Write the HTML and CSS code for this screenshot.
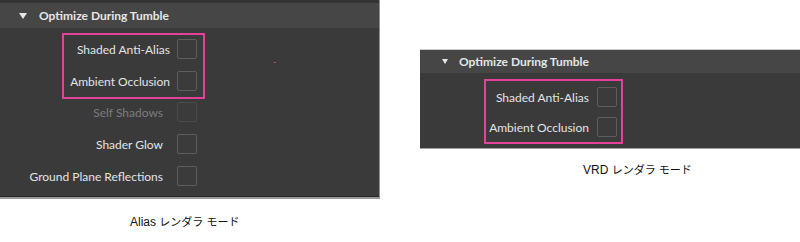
FILE: index.html
```html
<!DOCTYPE html>
<html>
<head>
<meta charset="utf-8">
<link rel="stylesheet" href="styles.css">
</head>
<body>
<div class="page">
  <div class="col col-left">
    <div class="panel panel-left">
      <div class="topstrip"></div>
      <div class="header header-left"><span class="tri"></span><span class="title">Optimize During Tumble</span></div>
      <div class="body body-left">
        <div class="form">
          <div class="hl hl-left">
            <div class="row"><span class="lbl">Shaded Anti-Alias</span><span class="cb"></span></div>
            <div class="row"><span class="lbl">Ambient Occlusion</span><span class="cb"></span></div>
          </div>
          <div class="row row-out"><span class="lbl lbl-out disabled">Self Shadows</span><span class="cb cb-dis"></span></div>
          <div class="row row-out"><span class="lbl lbl-out">Shader Glow</span><span class="cb"></span></div>
          <div class="row row-out"><span class="lbl lbl-out">Ground Plane Reflections</span><span class="cb"></span></div>
        </div>
        <span class="dot"></span>
      </div>
    </div>
    <div class="caption caption-left">Alias <span class="jp">レンダラ モード</span></div>
  </div>
  <div class="col col-right">
    <div class="panel panel-right">
      <div class="header header-right"><span class="tri"></span><span class="title">Optimize During Tumble</span></div>
      <div class="body body-right">
        <div class="form form-right">
          <div class="hl hl-right">
            <div class="row"><span class="lbl lbl-r">Shaded Anti-Alias</span><span class="cb"></span></div>
            <div class="row"><span class="lbl lbl-r">Ambient Occlusion</span><span class="cb"></span></div>
          </div>
        </div>
      </div>
    </div>
    <div class="caption caption-right">VRD <span class="jp">レンダラ モード</span></div>
  </div>
</div>
</body>
</html>
```

FILE: styles.css
```css
html, body {
  margin: 0;
  padding: 0;
  background: #ffffff;
}
body {
  font-family: Lato, "Liberation Sans", sans-serif;
  width: 800px;
  height: 242px;
  overflow: hidden;
}
.page {
  display: flex;
  align-items: flex-start;
}
.col-left {
  width: 380px;
}
.col-right {
  margin-left: 40px;
  margin-top: 49px;
  width: 380px;
}
.panel {
  background: #3a3a3a;
  box-sizing: border-box;
}
.panel-left {
  border-right: 1px solid #8e8e8e;
  border-bottom: 2px solid #9a9a9a;
  width: 380px;
}
.panel-right {
  border-top: 1px solid #c8c8c8;
  border-bottom: 1px solid #a0a0a0;
  width: 380px;
}
.topstrip {
  height: 3px;
  background: #343434;
}
.header {
  background: #464646;
  display: flex;
  align-items: center;
  color: #e4e6ea;
  font-weight: bold;
  font-size: 12px;
}
.header-left {
  height: 25px;
  padding-left: 19px;
}
.header-right {
  height: 23px;
  padding-left: 22px;
}
.tri {
  width: 0;
  height: 0;
  border-left: 4px solid transparent;
  border-right: 4px solid transparent;
  border-top: 6px solid #e6e6e6;
  margin-right: 12px;
}
.header-right .tri {
  border-left-width: 3.5px;
  border-right-width: 3.5px;
  border-top-width: 5px;
  margin-right: 11px;
}
.body {
  position: relative;
}
.body-left {
  height: 168px;
  border-bottom: 1px solid #262626;
}
.body-right {
  height: 75px;
}
.form {
  width: 205px;
  display: flex;
  flex-direction: column;
  align-items: flex-end;
}
.body-left .form {
  padding-top: 5px;
}
.form-right {
  width: 203px;
  padding-top: 6px;
}
.hl {
  box-sizing: border-box;
  border: 2px solid #e5409a;
  display: flex;
  flex-direction: column;
  align-items: flex-end;
}
.hl-left {
  width: 143px;
  padding: 4px 6px 6px 0;
  gap: 12px;
  margin-bottom: 3px;
}
.hl-right {
  width: 139px;
  padding: 6px 4px 5px 0;
  gap: 10px;
}
.row {
  display: flex;
  align-items: center;
  height: 20px;
}
.row-out {
  margin-right: 8px;
  margin-bottom: 12px;
}
.lbl {
  font-size: 12px;
  color: #e2e4e8;
  margin-right: 7px;
  white-space: nowrap;
}
.lbl-r {
  margin-right: 8px;
}
.lbl-out {
  margin-right: 14px;
}
.disabled {
  color: #7c7c7c;
}
.cb {
  flex: none;
  width: 18px;
  height: 18px;
  border: 1px solid #5e5e5e;
  border-radius: 2px;
  background: #3b3b3b;
}
.cb-dis {
  border-color: #4a4a4a;
}
.dot {
  position: absolute;
  left: 274px;
  top: 34px;
  width: 2px;
  height: 1px;
  background: #c43a7a;
}
.caption {
  font-family: "Liberation Sans", "Noto Sans CJK JP", sans-serif;
  font-size: 12px;
  line-height: 14px;
  color: #111;
}
.jp {
  font-size: 11px;
}
.caption-left {
  margin-top: 16px;
  padding-left: 130px;
}
.caption-right {
  margin-top: 14px;
  padding-left: 163px;
}
```
